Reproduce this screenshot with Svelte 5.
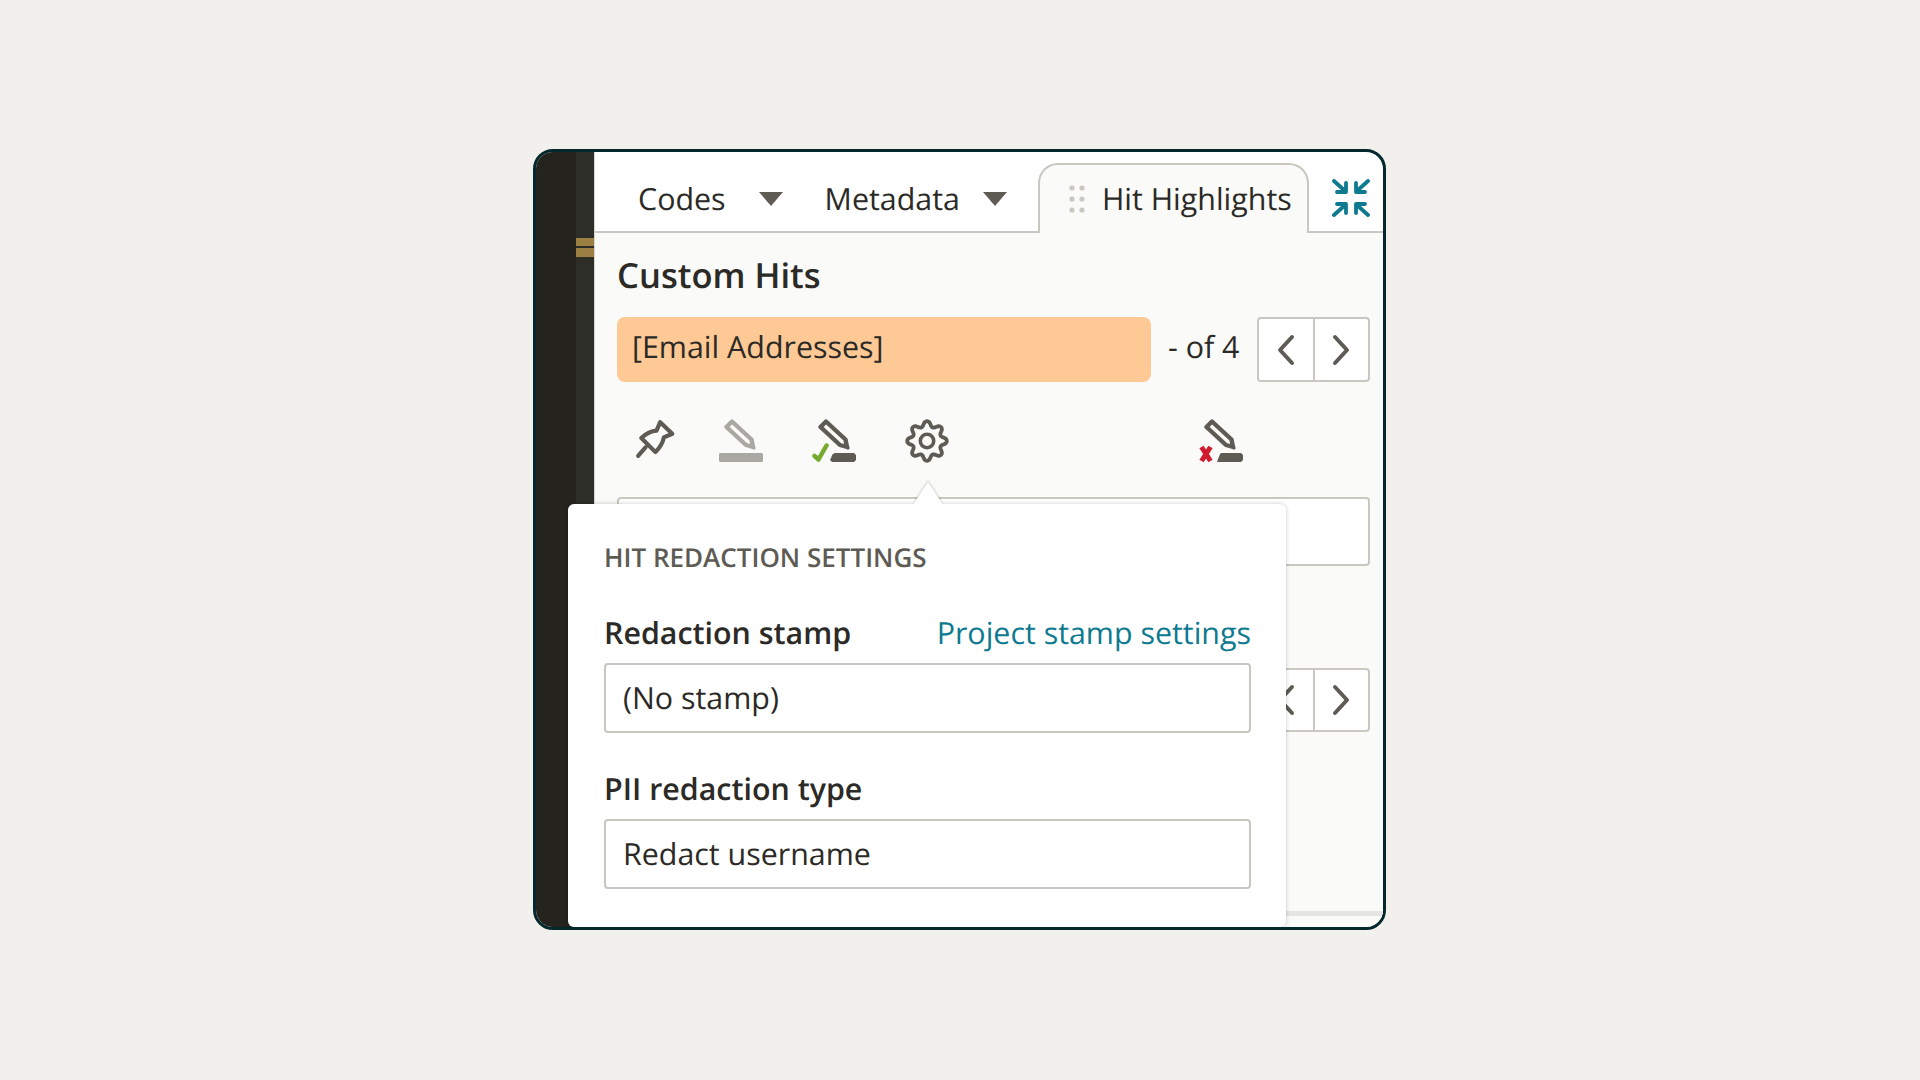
<script>
  const gearPath = Array.from({ length: 96 }, (_, i) => {
    const t = (i / 96) * Math.PI * 2;
    const wave = Math.cos(8 * t);
    const r = 17.2 + 2.6 * Math.sign(wave) * Math.pow(Math.abs(wave), 0.7);
    return `${i ? 'L' : 'M'}${(22 + r * Math.sin(t)).toFixed(2)} ${(22 - r * Math.cos(t)).toFixed(2)}`;
  }).join('') + 'Z';
</script>

<div class="page">
  <div class="frame">
    <aside class="rail">
      <div class="rail-inner"><span class="mark"></span><span class="mark"></span></div>
    </aside>
    <main class="main">
      <nav class="tabs">
        <div class="tab first">Codes<svg class="caret" viewBox="0 0 26 16"><path d="M1 1h24L13 15z" /></svg></div>
        <div class="tab second">Metadata<svg class="caret" viewBox="0 0 26 16"><path d="M1 1h24L13 15z" /></svg></div>
        <div class="tab active">
          <svg class="grip" viewBox="0 0 16 28"><circle cx="3" cy="3" r="2.6"/><circle cx="13" cy="3" r="2.6"/><circle cx="3" cy="14" r="2.6"/><circle cx="13" cy="14" r="2.6"/><circle cx="3" cy="25" r="2.6"/><circle cx="13" cy="25" r="2.6"/></svg>
          Hit Highlights
        </div>
        <button class="collapse" aria-label="Collapse">
          <svg viewBox="0 0 38 38"><g fill="none" stroke="#0d7a90" stroke-width="3.800" stroke-linecap="round" stroke-linejoin="round"><path d="M2 2l10 9M14 4v9H5"/><path d="M36 2L26 11M24 4v9h9"/><path d="M2 36l10-9M14 34v-9H5"/><path d="M36 36L26 27M24 34v-9h9"/></g></svg>
        </button>
      </nav>
      <section class="content">
        <h2>Custom Hits</h2>
        <div class="hit-row">
          <div class="hit">[Email Addresses]</div>
          <span class="count">- of 4</span>
          <div class="pager">
            <button aria-label="Previous"><svg viewBox="0 0 20 32"><path d="M16 3L4 16l12 13"/></svg></button>
            <button aria-label="Next"><svg viewBox="0 0 20 32"><path d="M4 3l12 13L4 29"/></svg></button>
          </div>
        </div>
        <div class="tools">
          <svg class="pin" viewBox="0 0 40 40"><path d="M24 4L35.500 15 27.500 18.500Q26 26 19.500 32.500L6 19Q13 12.500 20.500 12ZM10 28L3 36" fill="none" stroke="#5d5b54" stroke-width="4" stroke-linejoin="round" stroke-linecap="round"/></svg>
          <svg class="pen grey" viewBox="0 0 44 44"><path d="M13 2.500L7.500 8 27 26 34 28 32.500 20.500Z" fill="none" stroke="#a9a8a2" stroke-width="4.400" stroke-linejoin="round"/><path d="M33 25l4 4-2 2-4-4z" fill="#a9a8a2"/><rect x="0" y="34" width="44" height="9" rx="1.500" fill="#a9a8a2"/></svg>
          <svg class="pen check" viewBox="0 0 44 44"><path d="M14 2.500L8.500 8 28 26 35 28 33.500 20.500Z" fill="none" stroke="#5d5b54" stroke-width="4.400" stroke-linejoin="round"/><path d="M34 25l4 4-2 2-4-4z" fill="#5d5b54"/><path d="M18 41l2.500-5.500 2-1.500H42l2 2v5l-2 2H20z" fill="#5d5b54"/><path d="M2.500 37L6.500 40.500 14.500 26.500" fill="none" stroke="#76ab2f" stroke-width="4.500" stroke-linecap="round" stroke-linejoin="round"/></svg>
          <svg class="gear" viewBox="0 0 44 44">
            <path d={gearPath} fill="none" stroke="#5d5b54" stroke-width="3.800" stroke-linejoin="round"/>
            <circle cx="22" cy="22" r="6.700" fill="none" stroke="#5d5b54" stroke-width="3.600"/>
          </svg>
          <svg class="pen cross" viewBox="0 0 44 44"><path d="M13 2.500L7.500 8 27 26 34 28 32.500 20.500Z" fill="none" stroke="#5d5b54" stroke-width="4.400" stroke-linejoin="round"/><path d="M33 25l4 4-2 2-4-4z" fill="#5d5b54"/><path d="M18 43l3-8 1.500-1H42l2 2v5l-2 2z" fill="#5d5b54"/><path d="M2.500 28L11.500 42M11.500 28L2.500 42" fill="none" stroke="#d01c2e" stroke-width="5"/></svg>
        </div>
        <div class="ghost-input"></div>
        <div class="pager-row">
          <div class="pager">
            <button aria-label="Previous"><svg viewBox="0 0 20 32"><path d="M16 3L4 16l12 13"/></svg></button>
            <button aria-label="Next"><svg viewBox="0 0 20 32"><path d="M4 3l12 13L4 29"/></svg></button>
          </div>
        </div>
        <div class="scrollbar"></div>
      </section>
    </main>

    <div class="popover">
      <span class="arrow"></span>
      <h3>HIT REDACTION SETTINGS</h3>
      <div class="label-row">
        <span class="label">Redaction stamp</span>
        <span class="link">Project stamp settings</span>
      </div>
      <div class="field">(No stamp)</div>
      <div class="label solo">PII redaction type</div>
      <div class="field">Redact username</div>
    </div>
  </div>
</div>

<style>
  :global(body) { margin: 0; background: #f1f0ec; }
  .page {
    height: 1080px;
    box-sizing: border-box;
    padding: 149px 0 0 533px;
    font-family: "Open Sans", sans-serif;
    color: #2b2a26;
    text-rendering: geometricPrecision;
  }
  .frame {
    position: relative;
    width: 853px;
    height: 781px;
    box-sizing: border-box;
    border: 3px solid #04282c;
    border-radius: 20px;
    overflow: hidden;
    display: flex;
    background: #fff;
  }
  .rail {
    width: 58px;
    flex: none;
    background: #24231e;
    border-right: 1px solid #d8d7d2;
    box-sizing: content-box;
  }
  .rail-inner {
    margin-left: 40px;
    width: 18px;
    height: 100%;
    background: #2e2e28;
    padding-top: 86px;
    box-sizing: border-box;
    display: flex;
    flex-direction: column;
    gap: 2px;
  }
  .mark { height: 8px; background: #9c7f43; }
  .mark + .mark { height: 9px; }
  .main { flex: 1; min-width: 0; display: flex; flex-direction: column; }
  .tabs {
    height: 81px;
    flex: none;
    box-sizing: border-box;
    border-bottom: 2px solid #c8c7c0;
    display: flex;
    align-items: flex-end;
    font-size: 30.4px;
  }
  .tab { display: flex; align-items: center; height: 66px; box-sizing: border-box; }
  .first { margin-left: 43px; }
  .second { margin-left: 41px; }
  .caret { width: 26px; height: 16px; margin-left: 32px; fill: #5d5b54; margin-top: 1px; }
  .second .caret { margin-left: 22px; }
  .active {
    margin-left: 30px;
    margin-bottom: -2px;
    height: 70px;
    width: 271px;
    padding: 0 0 1px 29px;
    border: 2px solid #c8c7c0;
    border-bottom: 0;
    border-radius: 20px 20px 0 0;
    background: #fafaf8;
  }
  .grip { width: 16px; height: 28px; fill: #c8c7c0; margin-right: 17px; }
  .collapse {
    border: 0;
    background: none;
    padding: 0;
    margin: 0 0 14px 23px;
    width: 38px;
    height: 38px;
  }
  .collapse svg { display: block; }
  .content {
    flex: 1;
    background: #fafaf8;
    padding: 0 13px 0 22px;
    position: relative;
  }
  h2 { margin: 20px 0 0; font-size: 34.6px; line-height: 46px; font-weight: 600; }
  .hit-row { display: flex; align-items: center; margin-top: 18px; }
  .hit {
    width: 534px;
    height: 65px;
    box-sizing: border-box;
    background: #fec995;
    border-radius: 8px;
    padding: 0 15px 6px;
    display: flex;
    align-items: center;
    font-size: 30.4px;
  }
  .count { font-size: 30.4px; margin-left: 17px; padding-bottom: 7px; }
  .hit-row .pager { margin-left: auto; height: 65px; }
  .pager {
    display: flex;
    width: 113px;
    height: 64px;
    box-sizing: border-box;
    border: 2px solid #c8c7c0;
    border-radius: 4px;
    background: #fff;
  }
  .pager button {
    flex: 1;
    border: 0;
    padding: 0;
    background: none;
    display: flex;
    align-items: center;
    justify-content: center;
  }
  .pager button + button { border-left: 2px solid #c8c7c0; }
  .pager svg { width: 20px; height: 32px; fill: none; stroke: #5d5b54; stroke-width: 4; stroke-linecap: round; stroke-linejoin: round; }
  .tools { position: relative; height: 115px; }
  .tools svg { position: absolute; top: 37px; height: 44px; }
  .tools .pin { left: 18px; top: 36px; width: 42px; height: 42px; }
  .grey { left: 102px; width: 44px; }
  .check { left: 195px; width: 44px; }
  .gear { left: 288px; width: 44px; }
  .cross { left: 582px; width: 44px; }
  .ghost-input {
    height: 69px;
    box-sizing: border-box;
    border: 2px solid #c8c7c0;
    border-radius: 4px;
    background: #fff;
  }
  .pager-row { display: flex; justify-content: flex-end; margin-top: 102px; }
  .scrollbar {
    position: absolute;
    left: 0;
    right: 0;
    bottom: 11px;
    height: 5px;
    background: #e6e5e1;
  }
  .popover {
    position: absolute;
    left: 32px;
    top: 352px;
    width: 718px;
    height: 423px;
    box-sizing: border-box;
    background: #fff;
    border-radius: 6px;
    padding: 36px 35px 0 36px;
    box-shadow: 0 0 4px rgba(0, 0, 0, 0.22);
  }
  .arrow {
    position: absolute;
    left: 347px;
    top: -13px;
    width: 26px;
    height: 26px;
    background: #fff;
    transform: rotate(45deg) skew(12deg, 12deg);
    box-shadow: -1px -1px 2px rgba(0, 0, 0, 0.16);
  }
  h3 {
    margin: 0;
    position: relative;
    font-size: 26px;
    line-height: 34px;
    font-weight: 600;
    color: #5d5b54;
  }
  .label-row { display: flex; justify-content: space-between; align-items: baseline; margin-top: 38px; }
  .label { font-size: 30.4px; font-weight: 600; line-height: 41px; }
  .link { font-size: 30.4px; color: #0d7a90; line-height: 41px; }
  .field {
    margin-top: 10px;
    height: 70px;
    box-sizing: border-box;
    border: 2px solid #c8c7c0;
    border-radius: 4px;
    padding: 0 17px 2px;
    display: flex;
    align-items: center;
    font-size: 30.4px;
    background: #fff;
  }
  .solo { margin-top: 35px; }
</style>
